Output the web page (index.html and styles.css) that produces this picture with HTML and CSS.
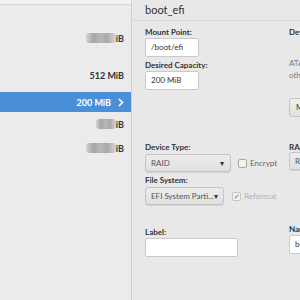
FILE: index.html
```html
<!DOCTYPE html>
<html>
    <head>
        <title>Manual Partitioning</title>
        <link rel="stylesheet" href="styles.css">
    </head>
    <body>
        <div class="screen">
            <div class="sidebar">
                <div class="topline"></div>
                <div class="row row-first"><span class="blur blur-wide"></span>iB</div>
                <div class="row row-second">512 MiB</div>
                <div class="row selected">200 MiB
                    <svg class="chev" width="6" height="9" viewBox="0 0 6 9"><path d="M1 1 L4.5 4.5 L1 8" fill="none" stroke="#fff" stroke-width="1.6"/></svg>
                </div>
                <div class="row row-small"><span class="blur blur-short"></span>iB</div>
                <div class="row row-small"><span class="blur blur-wide"></span>iB</div>
            </div>

            <div class="detail">
                <div class="header">boot_efi</div>
                <div class="form">
                    <div class="col col-left">
                        <label class="lbl">Mount Point:</label>
                        <div class="entry entry-short">/boot/efi</div>
                        <label class="lbl lbl-next">Desired Capacity:</label>
                        <div class="entry entry-short">200 MiB</div>

                        <label class="lbl lbl-type">Device Type:</label>
                        <div class="combo-row">
                            <div class="combo combo-type">RAID <span class="arrow">&#x25BE;</span></div>
                            <span class="check"></span>
                            <span class="check-text">Encrypt</span>
                        </div>
                        <label class="lbl lbl-fs">File System:</label>
                        <div class="combo-row">
                            <div class="combo combo-fs">EFI System Parti... <span class="arrow">&#x25BE;</span></div>
                            <span class="check checked">&#x2714;</span>
                            <span class="check-text off">Reformat</span>
                        </div>

                        <label class="lbl lbl-label">Label:</label>
                        <div class="entry entry-long"></div>
                    </div>
                    <div class="col col-right">
                        <label class="lbl">Device(s):</label>
                        <div class="devices">ATA VBOX HARDDISK<br>other</div>
                        <div class="btn">Modify...</div>
                        <label class="lbl lbl-raid">RAID Level:</label>
                        <div class="combo combo-raid">RAID1</div>
                        <label class="lbl lbl-name">Name:</label>
                        <div class="entry entry-name">boot_efi</div>
                    </div>
                </div>
            </div>
        </div>
    </body>
</html>
```

FILE: styles.css
```css
body {
    margin: 0;
    font-family: Lato, "Open Sans", sans-serif;
    color: #2e3436;
    background-color: #e8e8e8;
}
.screen {
    display: flex;
    width: 300px;
    height: 300px;
    overflow: hidden;
}
.sidebar {
    width: 131px;
    flex: none;
    background-color: #ebebeb;
    border-right: 1px solid #d0d0d0;
}
.topline {
    height: 4px;
    border-bottom: 1px solid #d6d6d6;
    background-color: #f2f2f2;
}
.row {
    display: flex;
    justify-content: flex-end;
    align-items: center;
    height: 24px;
    padding-right: 7px;
    font-size: 9px;
    font-weight: bold;
}
.row-first {
    margin-top: 21px;
}
.row-second {
    margin-top: 13px;
}
.selected {
    margin-top: 5px;
    height: 20px;
    padding-right: 7px;
    background-color: #4a90d9;
    color: #fff;
}
.chev {
    margin-left: 7px;
}
.blur {
    display: inline-block;
    height: 10px;
    border-radius: 3px;
    background: linear-gradient(90deg, #d4d4d4, #a6a6a6 25%, #b8b8b8 50%, #a9a9a9 70%, #d6d6d6);
}
.blur-wide {
    width: 30px;
}
.blur-short {
    width: 20px;
}
.detail {
    flex: 1;
    min-width: 0;
}
.header {
    height: 20px;
    line-height: 20px;
    padding-left: 13px;
    font-size: 11px;
    border-bottom: 1px solid #d6d6d6;
}
.form {
    display: flex;
    padding-left: 13px;
}
.col {
    display: flex;
    flex-direction: column;
    align-items: flex-start;
}
.col-left {
    width: 144px;
    flex: none;
}
.col-right {
    flex: 1;
    min-width: 0;
    white-space: nowrap;
}
.lbl {
    display: block;
    height: 10px;
    line-height: 10px;
    margin-top: 6px;
    font-size: 8px;
    font-weight: bold;
    white-space: nowrap;
}
.lbl-next {
    margin-top: 3px;
}
.lbl-type {
    margin-top: 52px;
}
.lbl-fs {
    margin-top: 3px;
}
.lbl-label {
    margin-top: 22px;
}
.entry {
    box-sizing: border-box;
    height: 19px;
    line-height: 17px;
    margin-top: 1px;
    padding-left: 5px;
    font-size: 8px;
    background-color: #fff;
    border: 1px solid #c9c9c9;
    border-radius: 2px;
    white-space: nowrap;
    overflow: hidden;
}
.entry-short {
    width: 54px;
}
.entry-long {
    width: 93px;
}
.entry-name {
    width: 30px;
}
.combo-row {
    display: flex;
    align-items: center;
    margin-top: 2px;
}
.combo {
    box-sizing: border-box;
    display: flex;
    justify-content: space-between;
    align-items: center;
    height: 18px;
    padding: 0 6px 0 5px;
    font-size: 8px;
    color: #555;
    background: linear-gradient(#ececec, #e0e0e0);
    border: 1px solid #c4c4c4;
    border-radius: 3px;
    box-shadow: 0 1px 0 #d2d2d2;
    white-space: nowrap;
}
.combo-type {
    width: 86px;
}
.combo-fs {
    width: 79px;
}
.arrow {
    font-size: 8px;
    color: #333;
}
.check {
    box-sizing: border-box;
    width: 9px;
    height: 9px;
    margin-left: 7px;
    border: 1px solid #a8a8a8;
    border-radius: 2px;
    background-color: #f2f2f2;
    font-size: 7px;
    line-height: 7px;
    text-align: center;
    color: #999;
}
.checked {
    margin-left: 8px;
    border-color: #c4c4c4;
}
.check-text {
    margin-left: 3px;
    font-size: 8px;
    color: #666;
}
.off {
    color: #b0b0b0;
}
.devices {
    margin-top: 20px;
    font-size: 8px;
    line-height: 12px;
    color: #7a7a7a;
}
.btn {
    box-sizing: border-box;
    height: 19px;
    line-height: 17px;
    margin-top: 17px;
    padding: 0 6px;
    font-size: 8px;
    background: linear-gradient(#efefef, #e2e2e2);
    border: 1px solid #c2c2c2;
    border-radius: 3px;
}
.lbl-raid {
    margin-top: 25px;
}
.combo-raid {
    width: 40px;
    margin-top: 0;
}
.lbl-name {
    margin-top: 54px;
}
```
